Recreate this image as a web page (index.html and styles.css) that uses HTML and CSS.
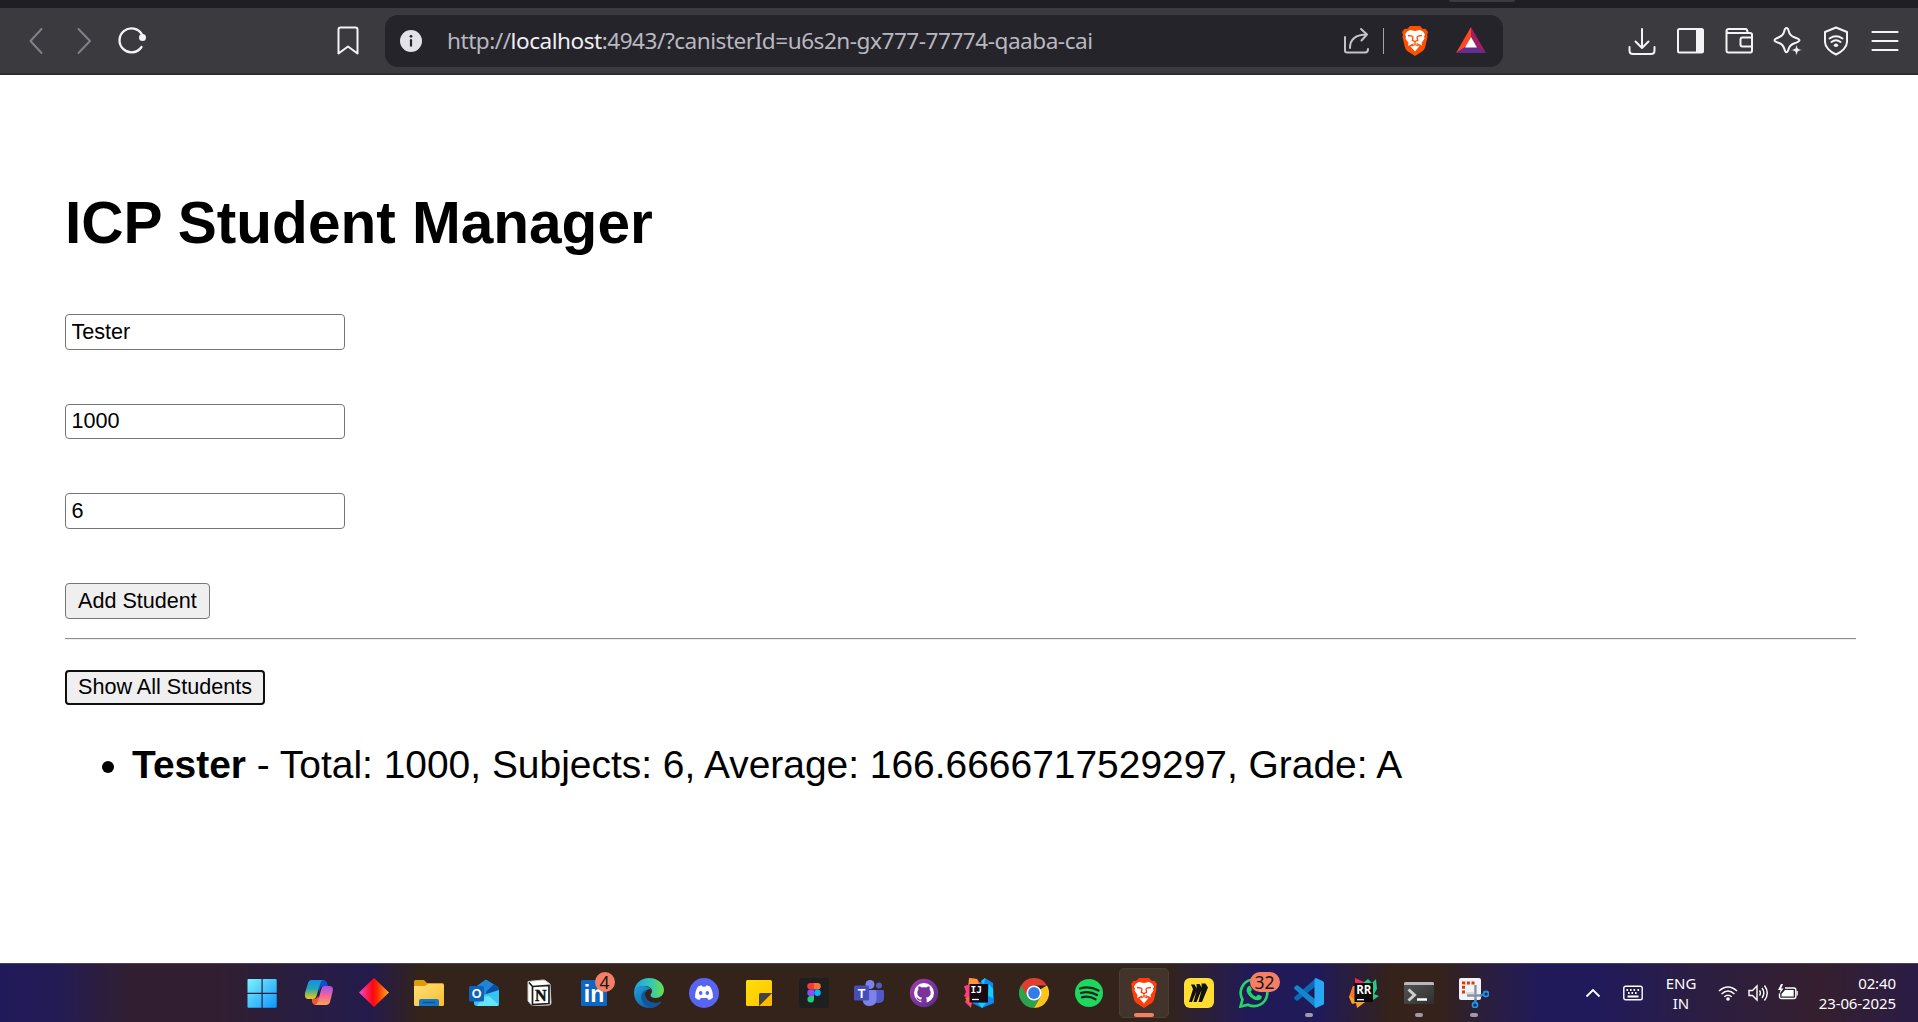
FILE: index.html
```html
<!DOCTYPE html>
<html lang="en">
<head>
<meta charset="utf-8">
<title>ICP Student Manager</title>
<link rel="stylesheet" href="styles.css">
</head>
<body>
<svg class="defs" width="0" height="0">
  <defs>
    <symbol id="lion" viewBox="0 0 26 30">
      <path d="M8 0h10l3 3 2.500-.3L26 6l-1 3 .6 1.800L23 21.500c-.5 1.800-1.500 3-3 4L13 30l-7-4.500c-1.500-1-2.500-2.200-3-4L.4 10.800 1 9 0 6l2.500-3.300L5 3z" fill="currentColor"/>
      <path d="M8 4l5 1 5-1 3 1.500 2 3-1 2 .5 2-3 4.500.5 2.500-4-2-1.500-.5v1l3 2L13 25.500 8.500 20.500l3-2v-1L10 18l-4 2 .5-3L3.500 12.500l.5-2-1-2 2-3z" fill="#fff"/>
      <path d="M6 9.500l4 .6 1 1-.7 3.200 2.700 1.200 2.700-1.200-.7-3.200 1-1 4-.6M13 15.500v3M9.500 20l3.500-1.500 3.500 1.500" fill="none" stroke="currentColor" stroke-width="1.300"/>
    </symbol>
    <linearGradient id="gWin" x2="1" y2="1"><stop stop-color="#7df3ff"/><stop offset="1" stop-color="#0e95ff"/></linearGradient>
    <linearGradient id="gCopA" x2="0" y2="1"><stop stop-color="#168bea"/><stop offset=".45" stop-color="#20a6b4"/><stop offset="1" stop-color="#f5c80e"/></linearGradient>
    <linearGradient id="gCopB" x2="0" y2="1"><stop stop-color="#a151ec"/><stop offset=".5" stop-color="#f0659a"/><stop offset="1" stop-color="#ffa052"/></linearGradient>
    <linearGradient id="gDia"><stop stop-color="#f54bd0"/><stop offset=".45" stop-color="#fa0713"/><stop offset=".6" stop-color="#fb2600"/><stop offset="1" stop-color="#ffae20"/></linearGradient>
    <linearGradient id="gFold" x2="1" y2="1"><stop stop-color="#ffe07a"/><stop offset="1" stop-color="#f9bd2d"/></linearGradient>
    <linearGradient id="gEdgeA"><stop stop-color="#229ee5"/><stop offset=".55" stop-color="#34c7b5"/><stop offset="1" stop-color="#69e04b"/></linearGradient>
    <linearGradient id="gEdgeB" x2="1" y2="1"><stop stop-color="#1ca0df"/><stop offset="1" stop-color="#124c98"/></linearGradient>
    <linearGradient id="gGit" x2="1" y2="1"><stop stop-color="#a03db0"/><stop offset="1" stop-color="#592c8c"/></linearGradient>
    <linearGradient id="gSticky" x2="1" y2="1"><stop stop-color="#ffde0a"/><stop offset="1" stop-color="#ffc400"/></linearGradient>
    <linearGradient id="gTerm" x2="1" y2="1"><stop stop-color="#555"/><stop offset="1" stop-color="#303030"/></linearGradient>
  </defs>
</svg>

<header class="browser">
  <div class="tabstrip"><div class="tab-edge"></div></div>
  <nav class="toolbar">
    <svg class="ico dim back" viewBox="0 0 30 30"><path d="M20.500 3L9.500 15 20.500 27"/></svg>
    <svg class="ico dim forward" viewBox="0 0 30 30"><path d="M9.500 3l11.500 12L9.500 27"/></svg>
    <svg class="ico reload" viewBox="0 0 30 30"><path d="M24.500 21A12 12 0 1 1 25 8.500"/><circle cx="25.500" cy="11.500" r="3.500" class="fill"/></svg>
    <svg class="ico bookmark" viewBox="0 0 30 30"><path d="M7.500 1.500h15q2 0 2 2v24l-9.500-7-9.500 7v-24q0-2 2-2z"/></svg>
    <div class="omnibox">
      <svg class="ico info" viewBox="0 0 30 30"><circle cx="15" cy="15" r="11" fill="#e4e2e9"/><circle cx="15" cy="10.300" r="1.400" fill="#25242a"/><path d="M15 14.200v5.500" stroke="#25242a" stroke-width="2.200"/></svg>
      <span class="url">http://<span class="host">localhost</span>:4943/?canisterId=u6s2n-gx777-77774-qaaba-cai</span>
      <svg class="ico share" viewBox="0 0 30 30"><path d="M3 11v13.500q0 2 2 2h18q3 0 3-3.500M8 22c0-9 6-13.500 17-13.500M19 3l6 5.500-5.500 6"/></svg>
      <span class="sep"></span>
      <svg class="shield-lion" viewBox="0 0 26 30"><use href="#lion"/></svg>
      <svg class="bat" viewBox="0 0 30 27"><path d="M15 0L0 26l9.500-6L15 10z" fill="#ff4724"/><path d="M15 0l15 26-9.500-6L15 10z" fill="#9e1f63"/><path d="M0 26h30l-9-6H9z" fill="#662d91"/><path d="M15 10l6 10.500H9z" fill="#fff"/></svg>
    </div>
    <div class="actions">
      <svg class="ico" viewBox="0 0 30 30"><path d="M15 3v19M8.500 15.500l6.500 6.500 6.500-6.500M2.500 21v3.500q0 3.500 3.500 3.500h18q3.500 0 3.500-3.500V21"/></svg>
      <svg class="ico" viewBox="0 0 30 30"><rect x="2" y="3" width="25" height="23.500" rx="1.500"/><path d="M20 3h7v23.500h-7z" class="fill"/></svg>
      <svg class="ico" viewBox="0 0 30 30"><path d="M26 7H5Q2.500 7 2.500 5T5 3h16.500q2 0 2 3.500M2.500 5v19.500q0 2 2 2h22q1.500 0 1.500-2V8.500Q28 7 26 7M28 11.500H18.500q-2 0-2 2v5q0 2 2 2H28"/></svg>
      <svg class="ico" viewBox="0 0 30 30"><path d="M13.500 2c1 0 1.800 1 2.200 3 .8 3.500 2 5 5.500 6.200 3 1 5.300 1.800 5.300 3s-2 2-5 3c-3.500 1.200-5 2.500-6 6-.6 2-1 3-2 3s-1.500-1-2-3c-1-3.500-2.300-5-5.500-6.200-3-1-4.500-1.800-4.500-2.800s2-2 4.500-3c3.200-1.200 4.500-2.700 5.300-6.200.5-2 1.200-3 2.200-3z"/><path d="M23.500 18.500l1.500 4 4.500 1.500-4.500 1.500-1.500 4.500-1.500-4.500-4.500-1.500 4.500-1.500z" fill="#f4f4f6" stroke="#3b3a3f" stroke-width=".8"/></svg>
      <svg class="ico" viewBox="0 0 30 30"><path d="M15 1.500l11 4.500v10c0 5-5 10-11 12.500C9 26 4 21 4 16V6z"/><path d="M8.500 12.500q6.500-4.500 13 0M10.500 16q4.500-3.500 9 0"/><ellipse cx="15" cy="19.300" rx="2.200" ry="1.700" class="fill"/></svg>
      <svg class="ico menu" viewBox="0 0 30 30"><path d="M2.500 6h25M2.500 15h25M2.500 24h25"/></svg>
    </div>
  </nav>
</header>

<main class="page">
  <h1 class="title">ICP Student Manager</h1>
  <form class="form">
    <input class="field" type="text" value="Tester">
    <input class="field" type="text" value="1000">
    <input class="field" type="text" value="6">
    <button class="btn" type="button">Add Student</button>
  </form>
  <hr class="rule">
  <button class="btn focused" type="button">Show All Students</button>
  <ul class="students">
    <li><strong>Tester</strong> - Total: 1000, Subjects: 6, Average: 166.6666717529297, Grade: A</li>
  </ul>
</main>

<footer class="taskbar">
  <div class="apps">
    <div class="app start"><svg viewBox="0 0 30 30"><path d="M.5 2q0-1 1-1h13v13.700H.5zM15.700 1h13q1 0 1 1v12.700h-14zM.5 16h14v13.700h-13q-1 0-1-1zM15.700 16h14v12.700q0 1-1 1h-13z" fill="url(#gWin)"/></svg></div>
    <div class="app"><svg viewBox="0 0 30 30"><path d="M14 2h5q3 0 4 3l1 3h-5q-2 0-3 3l-1 3z" fill="#174fc9"/><path d="M7 2h12q-2 .5-3 4l-3.500 12q-1 3-3.500 3H4q-4-.5-3-6L4 5q1-3 3-3z" fill="url(#gCopA)"/><path d="M8 21h3q2 0 3-3l2 5-2 4h-3q-2 0-3-3z" fill="#f0552e"/><path d="M20 8h6q4 .5 2.500 6L26 24q-1 3-4 3H11q2-.5 3-4l3-11q1-4 3-4z" fill="url(#gCopB)"/></svg></div>
    <div class="app"><svg viewBox="0 0 30 30"><path d="M15 0l15 14.500L15 29 0 14.500z" fill="url(#gDia)"/></svg></div>
    <div class="app"><svg viewBox="0 0 30 30"><path d="M0 3.500Q0 2 1.500 2H10l3 3h15q2 0 2 2v5H0z" fill="#dc9b08"/><path d="M0 8h11l3-2h14.500q1.500 0 1.500 1.500v19q0 1.500-1.500 1.500h-27Q0 28 0 26.500z" fill="url(#gFold)"/><path d="M5 28v-5q0-2 2-2h16q2 0 2 2v5z" fill="#1577c6"/><path d="M9 24.500h12" stroke="#0a4f91" stroke-width="1.300"/></svg></div>
    <div class="app"><svg viewBox="0 0 30 30"><path d="M5 10l11-8q1-.7 2 0l11 7v5L14 24H5z" fill="#1d86d8"/><path d="M17 14l8-8 5 4v4l-12 8z" fill="#0b4da5"/><path d="M5 20l25-8v14q0 2-2 2H8q-3 0-3-3z" fill="#35c5f1"/><path d="M14 19l6-1 10 9-2 1H8z" fill="#65e4fa"/><rect y="8" width="15" height="15.500" rx="1.500" fill="#0e62bc"/><text x="7.500" y="20" class="glyph" font-size="12.500" fill="#fff">O</text></svg></div>
    <div class="app"><svg viewBox="0 0 30 30"><path d="M4 3.500l15-1.500q2 0 3 1l4 3 1 19q0 2-2 2L10 27.500q-2 0-3-1L4 23z" fill="#fff" stroke="#c9c9c9" stroke-width="1"/><path d="M8.500 8.500l16.500-1v18l-16.500 1zM5 4.500l3.500 4" fill="#fff" stroke="#1c1c1c" stroke-width="1.700"/><text x="16.800" y="22.500" class="glyph serif" font-size="16" fill="#111" stroke="#111" stroke-width=".5">N</text></svg></div>
    <div class="app"><svg viewBox="0 0 30 30"><rect x="2" y="2" width="26" height="26" rx="1.500" fill="#0f66c2"/><text x="15" y="24" class="glyph" font-size="23" fill="#fff">in</text></svg><span class="badge">4</span></div>
    <div class="app"><svg viewBox="0 0 30 30"><path d="M0 14C1 5 7 0 15 0c9 0 15 6 15 12 0 5-4 8-8.500 8-3 0-5-1-5-3 0-1 1.500-1.500 1.500-4 0-3-3-5-8-5-5 0-8 2-10 6z" fill="url(#gEdgeA)"/><path d="M0 15c0-4 4-7 9-7 4 0 7 1.500 8 3.500-4-1-6 2-6 5 0 5 5 8.500 11 8.500 2 0 4-.8 5.500-1.500C25 27.500 21 30 15 30 7 30 0 23.500 0 15z" fill="url(#gEdgeB)"/><path d="M12 12c-4 1.500-6 6-4 10.500 1.800 4.500 6 7.500 10 7.200 4-.5 7.500-3 9.500-6.200-1.500.8-3.500 1.500-5.500 1.500-6 0-11-3.500-11-8.500 0-2 .3-3.500 1-4.500z" fill="#145598"/></svg></div>
    <div class="app"><svg viewBox="0 0 30 30"><circle cx="15" cy="15" r="15" fill="#5865f2"/><path d="M9 8.500q2-1 4-1l.6 1.200h2.800L17 7.500q2 0 4 1 3 4.500 3 11-2 2-4.500 2.500l-1.200-2h-6.600l-1.200 2Q8 21.500 6 19.500q0-6.500 3-11z" fill="#fff"/><ellipse cx="11.700" cy="15" rx="1.800" ry="2" fill="#5865f2"/><ellipse cx="18.300" cy="15" rx="1.800" ry="2" fill="#5865f2"/></svg></div>
    <div class="app"><svg viewBox="0 0 30 30"><path d="M3.500 2h23q1.500 0 1.500 1.500v11.500L15 28H3.500Q2 28 2 26.500v-23Q2 2 3.500 2z" fill="url(#gSticky)"/><path d="M15 28L28 15v11.500q0 1.500-1.500 1.500z" fill="#ffb900"/><path d="M15 28V16.500Q15 15 16.500 15H28z" fill="#46423f"/></svg></div>
    <div class="app"><svg viewBox="0 0 30 30"><rect width="30" height="30" rx="3" fill="#1f1f1f"/><path d="M15 5h-3.500a3.200 3.200 0 0 0 0 6.500H15z" fill="#ff3737"/><path d="M15 5h3.500a3.200 3.200 0 0 1 0 6.500H15z" fill="#ff7237"/><path d="M15 11.500h-3.500a3.200 3.200 0 0 0 0 6.500H15z" fill="#874fff"/><circle cx="18.500" cy="14.800" r="3.250" fill="#00b6ff"/><path d="M15 18h-3.500a3.300 3.300 0 1 0 3.500 3.500z" fill="#24cb71"/></svg></div>
    <div class="app"><svg viewBox="0 0 30 30"><circle cx="25" cy="7.500" r="3" fill="#5059c9"/><path d="M20 12h9q1 0 1 1v7q0 4.500-5 5h-4z" fill="#5059c9"/><circle cx="16" cy="6.500" r="4.500" fill="#7b83eb"/><path d="M9 12h12q1.500 0 1.500 1.500V21q0 7-7 7-6 0-7-6z" fill="#7b83eb"/><rect y="7.500" width="15" height="15" rx="1.500" fill="#464eb8"/><text x="7.500" y="19.500" class="glyph" font-size="12.500" fill="#fff">T</text></svg></div>
    <div class="app"><svg viewBox="0 0 30 30"><circle cx="15" cy="15" r="14.200" fill="url(#gGit)"/><circle cx="15" cy="15" r="10" fill="#fff"/><path d="M12.300 25.500v-3q-3 .6-4-1.200-.4-1.300-1.400-1.800 1.500-.5 2.400 1 1 1.400 3 .7.200-1.200.8-1.600-4.800-.6-4.800-5.200 0-1.900 1.100-3-.4-1.500.2-3.100 1.400 0 3.100 1.300 2.300-.6 4.600 0 1.700-1.300 3.100-1.300.6 1.600.2 3.100 1.100 1.100 1.100 3 0 4.600-4.800 5.200.8.800.8 2.300v3.600z" fill="#7a3499"/></svg></div>
    <div class="app"><svg viewBox="0 0 30 30"><path d="M0 8l4-1 1-7 8 1 4 5-9 18-1 6-6-6 2-4-3-2 2-4z" fill="#ff3c7d"/><path d="M5 0l8 1 2 6-10 2z" fill="#fb9a30"/><path d="M15 6l6-6 8 5 1 20-5 2-7 3-10-5z" fill="#0a8bf5"/><path d="M17 3l4-3-1 7zM25 6l4 5v9l-5-2zM14 25l4 5 4-5z" fill="#19cdf2"/><path d="M1 20l6-2v10z" fill="#f86b3c"/><rect x="5.500" y="6" width="18.500" height="18.500" fill="#150912"/><text x="12.300" y="15" class="glyph mono" font-size="9.500" fill="#fff">IJ</text><path d="M8 21.500h7" stroke="#fff" stroke-width="1.300"/></svg></div>
    <div class="app"><svg viewBox="0 0 30 30"><path d="M15 15L2 7.500A15 15 0 0 0 15 30l6.500-11.200z" fill="#2ba24c"/><path d="M15 15l13-7.500A15 15 0 0 1 15 30l6.500-11.200z" fill="#fcc31e"/><path d="M2 7.500a15 15 0 0 1 26 0H15l-6.500 11.200z" fill="#df3e30"/><circle cx="15" cy="15" r="7.500" fill="#fff"/><circle cx="15" cy="15" r="5.900" fill="#2f7de9"/></svg></div>
    <div class="app"><svg viewBox="0 0 30 30"><circle cx="15" cy="15" r="14" fill="#1ed760"/><path d="M6 10.500q9.500-2.800 18.500 2M7 15q8.500-2.300 16 2M8 19.300q7-1.800 13.500 2" fill="none" stroke="#20261b" stroke-width="2.300" stroke-linecap="round"/></svg></div>
    <div class="app active"><svg viewBox="0 0 30 30"><g color="#ff3d0a"><use href="#lion" x="2" width="26" height="30"/></g></svg><span class="run"></span></div>
    <div class="app"><svg viewBox="0 0 30 30"><rect width="30" height="30" rx="6" fill="#ffdd33"/><path d="M7 6.500h3.500l2.200 4L12.500 6h3l2.200 3.500L17.500 5.500h4l2.500 4-6 14.500h-3.500l3-12-5 12H9.500l3-11-4.500 11H5l4-13z" fill="#111"/></svg></div>
    <div class="app"><svg viewBox="0 0 30 30"><path d="M1.500 28.500l2-7A13.300 13.300 0 1 1 9 26.700z" fill="none" stroke="#25d366" stroke-width="2.700"/><path d="M9 8.500q1.500-1.500 2.500 0l1.300 2.700q.3 1-1.300 2.600 2 3.700 5.500 5l1.800-2q1-.5 4 1.500.5 3.500-4 4-5 0-9-5-4-5-.8-8.800z" fill="#25d366"/></svg><span class="badge wide">32</span></div>
    <div class="app"><svg viewBox="0 0 30 30"><path d="M22 0v8L4 22.500q-1 .7-1.800 0L.5 21q-.8-1 0-2z" fill="#0a6ab5"/><path d="M22 30v-8L4 7.500q-1-.7-1.800 0L.5 9q-.8 1 0 2z" fill="#1585cf"/><path d="M22 0l7 3.200q1 .5 1 1.500v20.600q0 1-1 1.500L22 30q-1.500-.5-1.500-2V2q0-1.500 1.500-2z" fill="#2aa7f2"/></svg><span class="dot"></span></div>
    <div class="app"><svg viewBox="0 0 30 30"><path d="M6 0l9 4 6 4-15 4z" fill="#f5265a"/><path d="M14 5l5-4 4 4 4-4 1 10-3 5 5 2-6 4-6-10z" fill="#21c98a"/><path d="M4 8L0 19l3 7 4-1 1 5 11-8L8 8z" fill="#fca02c"/><path d="M4 8l4 4-2 10-5-4z" fill="#f5762c"/><rect x="5.500" y="5" width="18.500" height="19" fill="#090909"/><text x="14.800" y="16" class="glyph sans" font-size="11.500" fill="#fff">RR</text><path d="M8 21.700h7" stroke="#fff" stroke-width="1.300"/></svg></div>
    <div class="app"><svg viewBox="0 0 30 30"><rect y="4" width="30" height="22" rx="1.500" fill="url(#gTerm)"/><path d="M0 7V5.500Q0 4 1.500 4h27Q30 4 30 5.500V7z" fill="#b8b8b8"/><path d="M4.500 11.500l6 5.500-6 5.500" fill="none" stroke="#d0d0d0" stroke-width="3"/><path d="M13 21.500h10" stroke="#fff" stroke-width="2.500"/></svg><span class="dot"></span></div>
    <div class="app"><svg viewBox="0 0 30 30"><rect width="22" height="22" rx="2" fill="#f1f3f8"/><path d="M15.500 5H4.500v10.500" fill="none" stroke="#d83b01" stroke-width="3" stroke-dasharray="3 1.600"/><path d="M7 15h9V7" fill="none" stroke="#d7dae2" stroke-width="2"/><path d="M16.500 7v16M8 17.500h15" stroke="#8b929e" stroke-width="2.300"/><circle cx="16" cy="27" r="2.500" fill="none" stroke="#1e94e6" stroke-width="1.800"/><circle cx="27" cy="16" r="2.500" fill="none" stroke="#1e94e6" stroke-width="1.800"/><path d="M16.500 21v4M21 17.500l4-1" stroke="#1e94e6" stroke-width="2"/></svg><span class="dot"></span></div>
  </div>
  <div class="tray">
    <svg class="chev" viewBox="0 0 16 16"><path d="M1.500 11.500L8 5l6.500 6.500"/></svg>
    <svg class="kbd" viewBox="0 0 20 16"><rect x=".8" y="1.300" width="18.400" height="13.400" rx="1.800"/><path d="M3.500 5h1.600M7 5h1.600M10.500 5h1.600M14.500 5h1.600M5 8h1.600M8.500 8h1.600M12 8h1.600M4.500 11.500h11" stroke-width="1.800"/></svg>
    <div class="lang"><span>ENG</span><span>IN</span></div>
    <svg class="wifi" viewBox="0 0 20 16"><path d="M1 6q9-8 18 0M3.500 9q6.500-6 13 0M6.300 11.800q3.700-3.300 7.400 0"/><circle cx="10" cy="14" r="1.800" class="fill"/></svg>
    <svg class="vol" viewBox="0 0 20 18"><path d="M1 6.500h3.500L9 2v14l-4.500-4.500H1zM11.500 6.500q1.800 2.500 0 5M14 4q3.700 5 0 10M16.500 1.500q5.500 7.500 0 15"/></svg>
    <svg class="batt" viewBox="0 0 20 18"><path d="M7 4h9q1.800 0 1.800 2v6.500q0 2-1.800 2H3.500q-2 0-2-2V9.500"/><path d="M7 6h8.700v6.500H3.500V10zM18.500 7h1.300v4.500h-1.300zM3 0L0 6h2.500L1.500 10l4-5.500H3.200L5 0z" class="fill"/></svg>
    <div class="clock"><span>02:40</span><span>23-06-2025</span></div>
  </div>
</footer>
</body>
</html>
```
FILE: styles.css
```css
* { box-sizing: border-box; }

body {
  margin: 0;
  width: 1918px;
  height: 1022px;
  display: flex;
  flex-direction: column;
  overflow: hidden;
  background: #fff;
  font-family: "Liberation Sans", Arial, sans-serif;
  color: #000;
}

.defs { position: absolute; }

/* Browser chrome */
.browser { flex: none; }

.tabstrip {
  height: 8px;
  padding-left: 1449px;
  background: #1f1e24;
}

.tab-edge {
  width: 66px;
  height: 2px;
  border-radius: 0 0 6px 6px;
  background: #3b3a3f;
}

.toolbar {
  display: flex;
  align-items: center;
  height: 67px;
  padding: 0 18px 0 21px;
  background: #3b3a3f;
  border-bottom: 2px solid #2c2b30;
}

.ico {
  flex: none;
  width: 30px;
  height: 30px;
  fill: none;
  stroke: #f4f4f6;
  stroke-width: 2;
  stroke-linecap: round;
  stroke-linejoin: round;
}

.ico .fill { fill: #f4f4f6; stroke: none; }
.dim { stroke: #828187; }
.forward { margin-left: 18px; }
.reload { margin-left: 18px; stroke-width: 2.300; }
.bookmark { margin-left: 186px; }
.info { stroke: none; }
.menu { stroke-width: 2.200; }

.omnibox {
  display: flex;
  align-items: center;
  width: 1118px;
  height: 52px;
  margin-left: 22px;
  padding-left: 11px;
  border-radius: 13px;
  background: #25242a;
}

.url {
  width: 649px;
  margin-left: 21px;
  font: 22.600px/30px "Noto Sans", sans-serif;
  letter-spacing: -0.490px;
  white-space: nowrap;
  color: #b9b8c0;
}

.host { color: #efeff3; }

.share { margin-left: 246px; stroke: #c3c2c9; }

.sep {
  width: 1px;
  height: 26px;
  margin-left: 11px;
  background: #a3a2a8;
}

.shield-lion {
  width: 26px;
  height: 30px;
  margin-left: 18px;
  color: #ff4f00;
}

.bat { width: 30px; height: 27px; margin-left: 28px; }

.actions {
  display: flex;
  gap: 18.600px;
  margin-left: auto;
}

/* Student manager page */
.page {
  flex: 1;
  padding: 0 62px 0 65px;
  font-size: 38.940px;
}

.title {
  margin: 113px 0 0;
  font-size: 58.550px;
  line-height: 70px;
}

.form {
  display: flex;
  flex-direction: column;
  align-items: flex-start;
  gap: 54.100px;
  margin-top: 56px;
}

.field,
.btn {
  height: 35.600px;
  margin: 0;
  border: 1px solid #767676;
  border-radius: 4px;
  font: 21.600px "Liberation Sans", Arial, sans-serif;
  color: #000;
}

.field {
  width: 280px;
  padding: 0 5.500px;
  background: #fff;
}

.btn {
  display: block;
  padding: 0 12px;
  background: #efefef;
  white-space: nowrap;
}

.focused { border: 2px solid #101010; padding: 0 11px; }

.rule {
  height: 2px;
  margin: 19px 0 30px;
  border: 0;
  border-top: 1px solid #8f8f8f;
  background: #eee;
}

.students {
  margin: 38px 0 0;
  padding-left: 67px;
  line-height: 44px;
  white-space: nowrap;
}

/* Taskbar */
.taskbar {
  flex: none;
  display: flex;
  align-items: center;
  height: 59px;
  padding: 0 22px 0 234.500px;
  border-top: 1px solid #4a4450;
  background: linear-gradient(90deg, #211a5a 0, #231b54 55px, #311f31 130px, #311f31 220px, #291e3f 290px, #241b4c 370px, #33231a 420px, #33231a 1165px, #2d2035 1200px, #211a58 1250px, #211a58 1320px, #34221b 1390px, #34221b 1440px, #2a1e40 1490px, #211a5a 1540px, #211a5a 1600px, #2b1e42 1700px, #351f2e 1820px, #2a1c46 1918px);
}

.apps { display: flex; height: 58px; align-items: center; }

.app {
  position: relative;
  display: flex;
  align-items: center;
  justify-content: center;
  width: 55px;
  height: 50px;
}

.start { margin-right: 2px; }

.app svg { width: 30px; height: 30px; }

.active::before {
  content: "";
  position: absolute;
  inset: 0 2.500px;
  border: 1px solid #4c3e36;
  border-radius: 5px;
  background: #42332b;
}

.active svg { position: relative; }

.glyph {
  text-anchor: middle;
  font-family: "Liberation Sans", Arial, sans-serif;
  font-weight: 700;
}

.serif { font-family: "Liberation Serif", serif; }
.mono { font-family: "DejaVu Sans Mono", monospace; }
.sans { font-family: "Open Sans", sans-serif; }

.badge {
  position: absolute;
  left: 28px;
  top: 4px;
  width: 20px;
  height: 20px;
  border-radius: 10px;
  background: #f47f65;
  color: #161616;
  font: 17.500px/20px "Noto Sans", sans-serif;
  text-align: center;
}

.wide { left: 23px; width: 30px; }

.run,
.dot {
  position: absolute;
  bottom: 1px;
  left: 17.500px;
  width: 20px;
  height: 4px;
  border-radius: 2px;
  background: #f47f65;
}

.dot { left: 23.500px; width: 8px; background: #a19ba9; }

.tray {
  display: flex;
  align-items: center;
  margin-left: auto;
  font: 15px/20px "Noto Sans", sans-serif;
  color: #fff;
}

.tray svg {
  flex: none;
  fill: none;
  stroke: #fff;
  stroke-width: 1.400;
}

.tray svg .fill { fill: #fff; stroke: none; }
.tray .chev { width: 16px; height: 16px; stroke-width: 1.800; }
.kbd { width: 20px; height: 16px; margin-left: 22px; }

.lang,
.clock {
  display: flex;
  flex-direction: column;
}

.lang { align-items: center; width: 32px; margin-left: 22px; }
.wifi { width: 20px; height: 16px; margin-left: 21px; }
.vol { width: 20px; height: 18px; margin-left: 10px; }
.batt { width: 20px; height: 18px; margin-left: 10px; }
.clock { align-items: flex-end; width: 80px; margin-left: 18px; letter-spacing: -0.100px; }
```
